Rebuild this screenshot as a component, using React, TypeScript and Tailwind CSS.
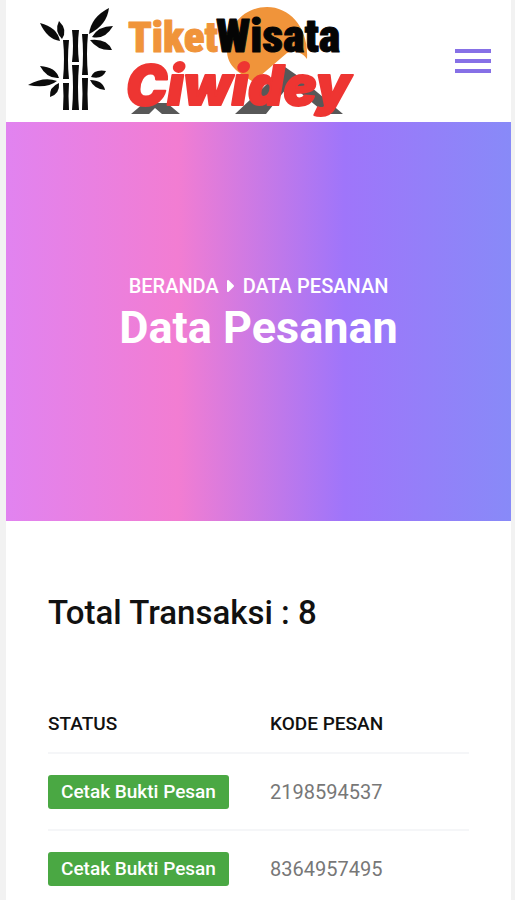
const orders = ["2198594537", "8364957495"];

function Logo() {
  return (
    <svg
      viewBox="0 0 360 120"
      className="h-[120px] w-[360px]"
      role="img"
      aria-label="Tiket Wisata Ciwidey"
    >
      {/* Bamboo stalks */}
      <g fill="#0b0b0b">
        <path d="M57 40h6q-2 20 0 39h-6q2-20 0-39zM57 83h6q-1 13 0 27h-6q1-14 0-27z" />
        <path d="M66 30h7q-2 16 0 32h-7q2-16 0-32zM66 65h7q-2 22 0 45h-7q2-23 0-45z" />
        <path d="M76 34h6q-2 20 0 41h-6q2-21 0-41zM76 78h6q-1 16 0 32h-6q1-16 0-32z" />
        {/* Leaves */}
        <path d="M34 23Q51 27 54 41Q41 39 34 23z" />
        <path d="M53 21Q62 30 56 39Q48 31 53 21z" />
        <path d="M103 8Q101 25 83 34Q85 17 103 8z" />
        <path d="M107 26Q99 40 86 37Q92 26 107 26z" />
        <path d="M84 40Q101 38 106 50Q92 51 84 40z" />
        <path d="M34 66Q50 67 53 78Q41 79 34 66z" />
        <path d="M22 85Q38 76 51 81Q41 89 22 85z" />
        <path d="M53 83Q54 94 44 97Q43 87 53 83z" />
        <path d="M85 77Q88 69 100 71Q96 80 85 77z" />
        <path d="M84 80Q97 80 99 90Q88 89 84 80z" />
      </g>
      {/* Map pin */}
      <path
        d="M221 52C220 24 240 7 261 7C284 7 303 28 301 59C297 53 289 49 281 53L247 82C240 76 222 70 221 52z"
        fill="#f0943a"
      />
      {/* Road */}
      <g fill="#585858">
        <path d="M138 103h23l13 11h-18l-7-6l-6 6h-18z" />
        <path d="M279 67L292 76L337 114H320L284 84L260 114H229z" />
      </g>
      <g strokeLinejoin="round">
        <text
          x="122"
          y="52"
          fontSize="43"
          fontWeight="900"
          fill="#f0943a"
          stroke="#f0943a"
          fontFamily="'Roboto Condensed', Roboto, sans-serif"
        >
          Tiket
        </text>
        <text
          x="210"
          y="52"
          fontSize="46"
          fontWeight="900"
          fill="#050505"
          stroke="#050505"
          fontFamily="'Roboto Condensed', Roboto, sans-serif"
        >
          Wisata
        </text>
        <text
          x="120"
          y="105"
          fontSize="55"
          fontWeight="900"
          fontStyle="italic"
          fill="#ee3532"
          stroke="#ee3532"
          strokeWidth="2"
          fontFamily="Inter, sans-serif"
        >
          Ciwidey
        </text>
      </g>
    </svg>
  );
}

export default function App() {
  return (
    <div className="min-h-screen bg-[#f2f2f2] pr-1 pl-1.5 font-[Roboto,sans-serif]">
      <div className="min-h-screen border-b border-[#e4e4e4] bg-white">
        <header className="flex h-[122px] items-center justify-between pr-5">
          <a href="#beranda" className="self-start">
            <Logo />
          </a>
          <button type="button" aria-label="Menu" className="flex w-9 flex-col gap-1.5">
            <span className="h-1 bg-[#8670e6]" />
            <span className="h-1 bg-[#8670e6]" />
            <span className="h-1 bg-[#8670e6]" />
          </button>
        </header>

        <section className="flex h-[399px] flex-col items-center justify-center bg-[linear-gradient(90deg,#e183f0_0%,#f27dd2_34%,#9f75fa_67%,#888af8_100%)] pb-3 text-white">
          <nav aria-label="Breadcrumb" className="flex items-center text-xl leading-6 font-medium">
            <a href="#beranda">BERANDA</a>
            <svg viewBox="0 0 8 14" className="mx-2 h-3.5 w-2" aria-hidden="true">
              <path d="M1 2l5 5l-5 5z" fill="white" stroke="white" strokeWidth="2" strokeLinejoin="round" />
            </svg>
            <span>DATA PESANAN</span>
          </nav>
          <h1 className="text-[45px] leading-[60px] font-bold">Data Pesanan</h1>
        </section>

        <main className="px-[42px] pt-[71px]">
          <h2 className="text-[33px] leading-[42px] font-medium text-[#111111]">Total Transaksi : 8</h2>
          <table className="mt-[61px] w-full table-fixed text-left">
            <thead>
              <tr className="h-[58px] border-b-2 border-[#f5f6f8] text-[19px] text-[#111111]">
                <th className="w-[222px] pt-0.5 font-medium">STATUS</th>
                <th className="pt-0.5 font-medium">KODE PESAN</th>
              </tr>
            </thead>
            <tbody className="text-xl text-[#777777]">
              {orders.map((code) => (
                <tr key={code} className="h-[77px] border-b-2 border-[#f5f6f8] last:border-b-0">
                  <td>
                    <button
                      type="button"
                      className="block h-[34px] rounded-[3px] bg-[#4aa843] px-[13px] text-[19px] leading-6 font-medium text-white"
                    >
                      Cetak Bukti Pesan
                    </button>
                  </td>
                  <td>{code}</td>
                </tr>
              ))}
            </tbody>
          </table>
        </main>
      </div>
    </div>
  );
}
